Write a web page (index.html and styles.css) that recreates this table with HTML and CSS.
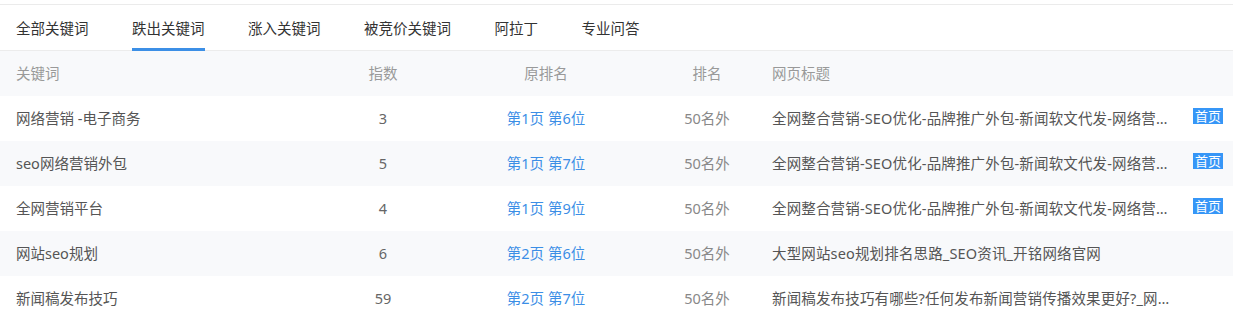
FILE: index.html
```html
<!DOCTYPE html>
<html lang="zh-CN">
<head>
<meta charset="utf-8">
<link rel="stylesheet" href="styles.css">
</head>
<body>
<div class="panel">
  <div class="tabs">
    <span class="tab">全部关键词</span>
    <span class="tab active">跌出关键词</span>
    <span class="tab">涨入关键词</span>
    <span class="tab">被竞价关键词</span>
    <span class="tab">阿拉丁</span>
    <span class="tab">专业问答</span>
  </div>
  <div class="table">
    <div class="row head">
      <div class="c kw">关键词</div>
      <div class="c num">指数</div>
      <div class="c orig">原排名</div>
      <div class="c rank">排名</div>
      <div class="c title">网页标题</div>
    </div>
    <div class="row">
      <div class="c kw">网络营销 -电子商务</div>
      <div class="c num">3</div>
      <div class="c orig link">第1页 第6位</div>
      <div class="c rank">50名外</div>
      <div class="c title"><span class="t">全网整合营销-SEO优化-品牌推广外包-新闻软文代发-网络营销外包公司</span><span class="badge">首页</span></div>
    </div>
    <div class="row alt">
      <div class="c kw">seo网络营销外包</div>
      <div class="c num">5</div>
      <div class="c orig link">第1页 第7位</div>
      <div class="c rank">50名外</div>
      <div class="c title"><span class="t">全网整合营销-SEO优化-品牌推广外包-新闻软文代发-网络营销外包公司</span><span class="badge">首页</span></div>
    </div>
    <div class="row">
      <div class="c kw">全网营销平台</div>
      <div class="c num">4</div>
      <div class="c orig link">第1页 第9位</div>
      <div class="c rank">50名外</div>
      <div class="c title"><span class="t">全网整合营销-SEO优化-品牌推广外包-新闻软文代发-网络营销外包公司</span><span class="badge">首页</span></div>
    </div>
    <div class="row alt">
      <div class="c kw">网站seo规划</div>
      <div class="c num">6</div>
      <div class="c orig link">第2页 第6位</div>
      <div class="c rank">50名外</div>
      <div class="c title"><span class="t">大型网站seo规划排名思路_SEO资讯_开铭网络官网</span></div>
    </div>
    <div class="row">
      <div class="c kw">新闻稿发布技巧</div>
      <div class="c num">59</div>
      <div class="c orig link">第2页 第7位</div>
      <div class="c rank">50名外</div>
      <div class="c title"><span class="t">新闻稿发布技巧有哪些?任何发布新闻营销传播效果更好?_网络营销资讯</span></div>
    </div>
  </div>
</div>
</body>
</html>
```
FILE: styles.css
```css
html, body {
  margin: 0;
  padding: 0;
  background: #fff;
}
body {
  font-family: "Noto Sans", "Noto Sans CJK SC", sans-serif;
  font-size: 14.5px;
  color: #555;
}
.panel {
  margin-top: 4px;
  border-top: 1px solid #ebebeb;
}
.tabs {
  display: flex;
  gap: 43.5px;
  padding: 0 16px;
  height: 46px;
  border-bottom: 1px solid #ececec;
  box-sizing: border-box;
}
.tab {
  display: flex;
  align-items: center;
  height: 45px;
  box-sizing: border-box;
  color: #333;
  white-space: nowrap;
  padding-bottom: 1px;
}
.tab.active {
  border-bottom: 3px solid #3c8fe6;
  padding-top: 2px;
  padding-bottom: 0;
  height: 46px;
}
.row {
  display: grid;
  grid-template-columns: 316px 134px 192px 130px 1fr;
  height: 45px;
  box-sizing: border-box;
  padding-bottom: 2px;
  align-items: center;
  background: #fff;
}
.row.alt, .row.head {
  background: #f8f9fb;
}
.row.head .c {
  color: #999;
}
.c {
  white-space: nowrap;
}
.kw {
  padding-left: 16px;
}
.num, .orig, .rank {
  text-align: center;
  color: #666;
}
.rank { color: #888; }
.link {
  color: #3b8ee6;
}
.title {
  display: flex;
  align-items: center;
  align-self: stretch;
  padding-right: 10px;
  min-width: 0;
}
.t {
  display: block;
  max-width: 410px;
  letter-spacing: 0.15px;
  overflow: hidden;
  text-overflow: ellipsis;
  white-space: nowrap;
}
.badge {
  margin-left: auto;
  align-self: flex-start;
  margin-top: 12px;
  width: 30px;
  height: 16px;
  display: flex;
  align-items: center;
  justify-content: center;
  background: #3696f7;
  color: #fff;
  font-size: 13px;
  line-height: 13px;
}
```
